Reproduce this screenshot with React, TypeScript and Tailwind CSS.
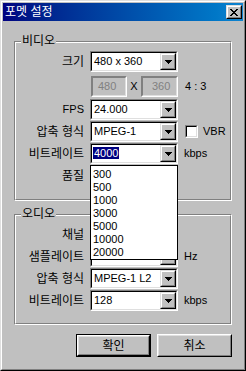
import React from "react";

const FONT = "font-['Liberation_Sans','Noto_Sans_CJK_KR',sans-serif]";

function Arrow() {
  return (
    <svg width="7" height="4" viewBox="0 0 7 4" shapeRendering="crispEdges">
      <rect x="0" y="0" width="7" height="1" fill="#000" />
      <rect x="1" y="1" width="5" height="1" fill="#000" />
      <rect x="2" y="2" width="3" height="1" fill="#000" />
      <rect x="3" y="3" width="1" height="1" fill="#000" />
    </svg>
  );
}

function DropBtn() {
  return (
    <div className="w-[16px] h-full shrink-0 border border-t-[#dfdfdf] border-l-[#dfdfdf] border-r-black border-b-black">
      <div className="w-full h-full border border-t-white border-l-white border-r-[#808080] border-b-[#808080] bg-[#c0c0c0] flex items-center justify-center">
        <Arrow />
      </div>
    </div>
  );
}

function Combo({ value, selected }: { value: string; selected?: boolean }) {
  return (
    <div className="w-[88px] h-[21px] shrink-0 border border-t-[#808080] border-l-[#808080] border-r-white border-b-white">
      <div className="h-full border border-t-black border-l-black border-r-[#dfdfdf] border-b-[#dfdfdf] bg-white flex items-center">
        <div className="flex-1 pl-[1px] text-[11px] leading-[13px] text-black whitespace-nowrap overflow-hidden">
          {selected ? (
            <span className="bg-[#000080] text-white px-[1px]">{value}</span>
          ) : (
            <span className="pl-[1px]">{value}</span>
          )}
        </div>
        <DropBtn />
      </div>
    </div>
  );
}

function Row({
  label,
  latin,
  className = "",
  children,
}: {
  label: string;
  latin?: boolean;
  className?: string;
  children?: React.ReactNode;
}) {
  return (
    <div className={`flex items-center h-[21px] ${className}`}>
      <div
        className={`w-[68px] shrink-0 text-right leading-none text-black ${
          latin ? "text-[11px]" : "text-[12px]"
        }`}
      >
        {label}
      </div>
      <div className="ml-[6px] flex items-center">{children}</div>
    </div>
  );
}

function Group({
  label,
  heightClass,
  children,
}: {
  label: string;
  heightClass: string;
  children: React.ReactNode;
}) {
  return (
    <div
      className={`relative ${heightClass} border border-t-[#808080] border-l-[#808080] border-r-white border-b-white`}
    >
      <div className="h-full border border-t-white border-l-white border-r-[#808080] border-b-[#808080] pt-[8px]">
        {children}
      </div>
      <span className="absolute left-[6px] top-[-8px] bg-[#c0c0c0] px-[1px] text-[12px] leading-[14px] text-black">
        {label}
      </span>
    </div>
  );
}

function Disabled({ value, w, pl }: { value: string; w: string; pl: string }) {
  return (
    <div
      className={`${w} h-[21px] shrink-0 border border-t-[#808080] border-l-[#808080] border-r-white border-b-white`}
    >
      <div
        className={`h-full border border-t-[#808080] border-l-[#808080] border-r-[#dfdfdf] border-b-[#dfdfdf] bg-[#c0c0c0] flex items-center ${pl} text-[11px] leading-none text-[#808080]`}
      >
        {value}
      </div>
    </div>
  );
}

function Side({ children }: { children: React.ReactNode }) {
  return <span className="ml-[6px] text-[11px] leading-none text-black">{children}</span>;
}

const items = ["300", "500", "1000", "3000", "5000", "10000", "20000"];

export default function App() {
  return (
    <div
      className={`${FONT} w-[246px] h-[371px] bg-[#c0c0c0] border border-t-[#dfdfdf] border-l-[#dfdfdf] border-r-black border-b-black select-none`}
    >
      <div className="h-full border border-t-white border-l-white border-r-[#808080] border-b-[#808080] p-[1px] flex flex-col">
        {/* Title bar */}
        <div className="h-[18px] shrink-0 bg-linear-to-r from-[#000080] to-[#1084d0] flex items-center pl-[2px] pr-[1px]">
          <span className="flex-1 text-white text-[12px] leading-none">포멧 설정</span>
          <div className="w-[16px] h-[14px] border border-t-[#dfdfdf] border-l-[#dfdfdf] border-r-black border-b-black">
            <div className="w-full h-full border border-t-white border-l-white border-r-[#808080] border-b-[#808080] bg-[#c0c0c0] flex items-center justify-center">
              <svg width="8" height="7" viewBox="0 0 8 7" shapeRendering="crispEdges">
                <path
                  d="M0 0h2v1h-2zM6 0h2v1h-2zM1 1h2v1h-2zM5 1h2v1h-2zM2 2h4v1h-4zM3 3h2v1h-2zM2 4h4v1h-4zM1 5h2v1h-2zM5 5h2v1h-2zM0 6h2v1h-2zM6 6h2v1h-2z"
                  fill="#000"
                />
              </svg>
            </div>
          </div>
        </div>

        <div className="px-[11px] pt-[20px] flex flex-col">
          <Group label="비디오" heightClass="h-[160px]">
            <Row label="크기">
              <Combo value="480 x 360" />
            </Row>
            <div className="flex items-center h-[21px] mt-[4px] pl-[75px]">
              <Disabled value="480" w="w-[36px]" pl="pl-[5px]" />
              <span className="w-[14px] text-center text-[11px] leading-none text-black">X</span>
              <Disabled value="360" w="w-[37px]" pl="pl-[9px]" />
              <span className="ml-[7px] text-[11px] leading-none text-black whitespace-pre">4 : 3</span>
            </div>
            <Row label="FPS" latin className="mt-[2px]">
              <Combo value="24.000" />
            </Row>
            <Row label="압축 형식" className="mt-[1px]">
              <Combo value="MPEG-1" />
              <div className="ml-[7px] w-[13px] h-[13px] border border-t-[#808080] border-l-[#808080] border-r-white border-b-white">
                <div className="w-full h-full border border-t-black border-l-black border-r-[#dfdfdf] border-b-[#dfdfdf] bg-white" />
              </div>
              <span className="ml-[5px] text-[11px] leading-none text-black">VBR</span>
            </Row>
            <Row label="비트레이트" className="mt-[1px]">
              <div className="relative">
                <Combo value="4000" selected />
                <div className="absolute left-0 top-[22px] z-10 w-[88px] border border-black bg-white pt-[2px]">
                  {items.map((it) => (
                    <div key={it} className="h-[13px] leading-[13px] pl-[2px] text-[11px] text-black">
                      {it}
                    </div>
                  ))}
                </div>
              </div>
              <Side>kbps</Side>
            </Row>
            <Row label="품질" className="mt-[1px]">
              <Combo value="" />
            </Row>
          </Group>

          <div className="mt-[13px]">
            <Group label="오디오" heightClass="h-[111px]">
              <Row label="채널">
                <Combo value="" />
              </Row>
              <Row label="샘플레이트" className="mt-[1px]">
                <Combo value="44100" />
                <Side>Hz</Side>
              </Row>
              <Row label="압축 형식" className="mt-[1px]">
                <Combo value="MPEG-1 L2" />
              </Row>
              <Row label="비트레이트" className="mt-[1px]">
                <Combo value="128" />
                <Side>kbps</Side>
              </Row>
            </Group>
          </div>

          <div className="mt-[9px] flex justify-end gap-[6px]">
            <div className="w-[75px] h-[23px] border border-black">
              <div className="w-full h-full border border-t-white border-l-white border-r-black border-b-black">
                <div className="w-full h-full border border-t-[#dfdfdf] border-l-[#dfdfdf] border-r-[#808080] border-b-[#808080] bg-[#c0c0c0] flex items-center justify-center text-[12px] leading-none text-black">
                  확인
                </div>
              </div>
            </div>
            <div className="w-[75px] h-[23px] border border-t-white border-l-white border-r-black border-b-black">
              <div className="w-full h-full border border-t-[#dfdfdf] border-l-[#dfdfdf] border-r-[#808080] border-b-[#808080] bg-[#c0c0c0] flex items-center justify-center text-[12px] leading-none text-black">
                취소
              </div>
            </div>
          </div>
        </div>
      </div>
    </div>
  );
}
